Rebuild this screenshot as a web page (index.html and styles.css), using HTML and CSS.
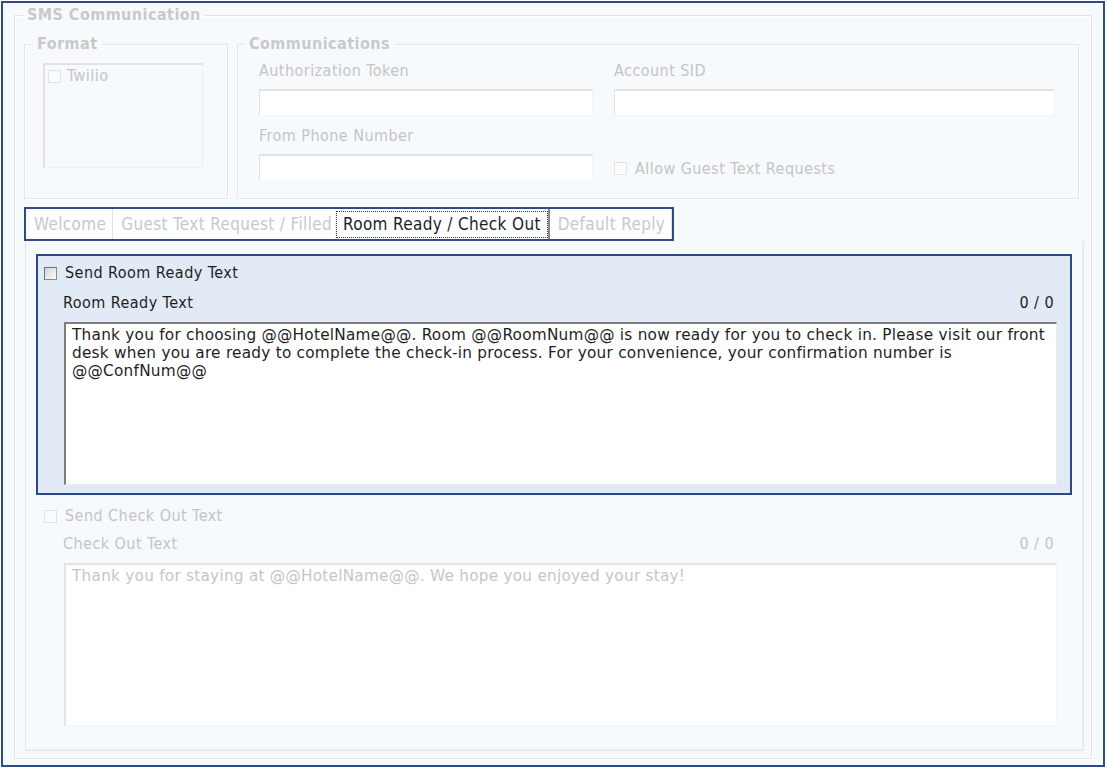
FILE: index.html
```html
<!DOCTYPE html>
<html lang="en">
<head>
    <meta charset="UTF-8">
    <meta name="viewport" content="width=device-width, initial-scale=1.0">
    <title>SMS Communication</title>
    <link rel="stylesheet" href="styles.css">
</head>
<body>
<div class="frame">
    <fieldset class="group sms">
        <legend>SMS Communication</legend>
        <div class="sms-body">
            <div class="top-row">
                <fieldset class="group format">
                    <legend>Format</legend>
                    <div class="listbox">
                        <label class="check disabled twilio"><input type="checkbox" disabled> Twilio</label>
                    </div>
                </fieldset>
                <fieldset class="group comms">
                    <legend>Communications</legend>
                    <div class="comms-grid">
                        <div class="field">
                            <label for="authToken">Authorization Token</label>
                            <input type="text" id="authToken" disabled>
                        </div>
                        <div class="field">
                            <label for="accountSid">Account SID</label>
                            <input type="text" id="accountSid" disabled>
                        </div>
                        <div class="field">
                            <label for="fromPhone">From Phone Number</label>
                            <input type="text" id="fromPhone" disabled>
                        </div>
                        <div class="field field-check">
                            <label class="check disabled"><input type="checkbox" disabled> Allow Guest Text Requests</label>
                        </div>
                    </div>
                </fieldset>
            </div>

            <div class="tabs">
                <span class="tab">Welcome</span>
                <span class="tab">Guest Text Request / Filled</span>
                <span class="tab active"><span class="focus">Room Ready / Check Out</span></span>
                <span class="tab">Default Reply</span>
            </div>

            <div class="tab-page">
                <div class="text-group highlight">
                    <label class="check"><input type="checkbox"> Send Room Ready Text</label>
                    <div class="group-head">
                        <span>Room Ready Text</span>
                        <span class="counter">0 / 0</span>
                    </div>
                    <textarea>Thank you for choosing @@HotelName@@. Room @@RoomNum@@ is now ready for you to check in. Please visit our front desk when you are ready to complete the check-in process. For your convenience, your confirmation number is @@ConfNum@@</textarea>
                </div>

                <div class="text-group muted">
                    <label class="check disabled"><input type="checkbox" disabled> Send Check Out Text</label>
                    <div class="group-head">
                        <span>Check Out Text</span>
                        <span class="counter">0 / 0</span>
                    </div>
                    <textarea disabled>Thank you for staying at @@HotelName@@. We hope you enjoyed your stay!</textarea>
                </div>
            </div>
        </div>
    </fieldset>
</div>
</body>
</html>
```

FILE: styles.css
```css
body {
    margin: 0;
    background-color: #fff;
    font-family: "DejaVu Sans Condensed", "DejaVu Sans", sans-serif;
    font-stretch: condensed;
    font-size: 16px;
    letter-spacing: 0.45px;
    color: #1e1e1e;
}
.frame {
    margin: 1px 3px 4px 1px;
    height: 766px;
    box-sizing: border-box;
    border: 2px solid #2c4a84;
    background-color: #f7fafd;
    padding: 3px 11px 0 11px;
}
fieldset.group {
    margin: 0;
    padding: 0;
    min-width: 0;
    box-sizing: border-box;
    border: 1px solid #e1e6ec;
    box-shadow: inset 1px 1px 0 #fff, 1px 1px 0 #fff;
}
legend {
    margin-left: 8px;
    padding: 0 4px;
    font-weight: bold;
    color: #c9c9c9;
    line-height: 18px;
}
.sms-body {
    padding: 11px 7px 7px 9px;
}
.top-row {
    display: flex;
    gap: 9px;
    margin-right: 5px;
}
.format {
    width: 204px;
}
.comms {
    flex: 1;
}
.comms legend {
    margin-left: 7px;
}
.listbox {
    margin: 10px 0 0 18px;
    width: 160px;
    height: 105px;
    box-sizing: border-box;
    border-top: 2px solid #e2e2e2;
    border-left: 2px solid #e2e2e2;
    border-right: 1px solid #f1f1f1;
    border-bottom: 1px solid #f1f1f1;
    padding: 2px 3px;
}
.comms-grid {
    display: grid;
    grid-template-columns: 334px 1fr;
    column-gap: 21px;
    row-gap: 11px;
    padding: 9px 23px 17px 21px;
}
.field label {
    display: block;
    line-height: 18px;
    margin-bottom: 9px;
    color: #c4c4c4;
}
.field input {
    display: block;
    width: 100%;
    height: 27px;
    margin: 0;
    padding: 0 4px;
    box-sizing: border-box;
    border: 0;
    border-top: 2px solid #e3e3e3;
    border-left: 1px solid #e3e3e3;
    border-right: 1px solid #f4f4f4;
    border-bottom: 1px solid #f4f4f4;
    background-color: #fff;
}
.field-check {
    display: flex;
    align-items: flex-end;
}
.field .check {
    display: flex;
    height: 25px;
    margin: 0;
}
.check {
    display: flex;
    align-items: center;
    gap: 8px;
    line-height: 18px;
}
.check.twilio {
    gap: 6px;
}
.check.disabled {
    color: #c4c4c4;
}
.check input {
    appearance: none;
    -webkit-appearance: none;
    margin: 0;
    width: 13px;
    height: 13px;
    flex: none;
    box-sizing: border-box;
    border: 1px solid #8c8c8c;
    border-top-color: #6f6f6f;
    border-left-color: #6f6f6f;
    border-radius: 0;
    background: linear-gradient(135deg, #d4d4d4, #fbfbfb);
}
.check input:disabled {
    border-color: #e2e2e2;
    background: #fbfbfb;
}
.tabs {
    display: flex;
    width: fit-content;
    height: 34px;
    box-sizing: border-box;
    margin: 8px 0 0 0;
    border: 2px solid #2c4a84;
    background-color: #fff;
    font-size: 17px;
    letter-spacing: 0.34px;
}
.tab {
    display: flex;
    align-items: center;
    padding: 0 6px 0 8px;
    border-right: 1px solid #e2e2e2;
    color: #c8c8c8;
}
.tab:nth-child(2) {
    padding-right: 3px;
    border-right: 1px solid #f0f0f0;
}
.tab.active {
    padding: 0 1px;
    border-right: 2px solid #8a8a8a;
    color: #1e1e1e;
    background-color: #fff;
}
.focus {
    display: block;
    margin-top: 1px;
    padding: 0 6px;
    line-height: 25px;
    outline: 1px dotted #333;
}
.tab-page {
    margin-left: 1px;
    border: 1px solid #e3e6ea;
    border-top: 0;
    box-shadow: inset -1px -1px 0 #eef0f2;
    padding: 13px 11px 14px 10px;
}
.text-group {
    border: 2px solid transparent;
    padding: 8px 13px 8px 6px;
}
.text-group.highlight {
    border-color: #2c4a84;
    background-color: #e2ebf5;
}
.text-group + .text-group {
    margin-top: 2px;
}
.group-head {
    display: flex;
    justify-content: space-between;
    margin: 12px 3px 10px 19px;
    line-height: 18px;
}
.muted .group-head {
    margin-top: 10px;
    color: #c4c4c4;
}
textarea {
    display: block;
    width: calc(100% - 20px);
    height: 163px;
    margin: 0 0 0 20px;
    box-sizing: border-box;
    padding: 2px 6px;
    border: 0;
    border-top: 2px solid #7d7d7d;
    border-left: 2px solid #7d7d7d;
    border-right: 1px solid #ececec;
    border-bottom: 1px solid #ececec;
    background-color: #fff;
    font-family: "DejaVu Sans", sans-serif;
    font-stretch: normal;
    font-size: 15.3px;
    letter-spacing: 0.24px;
    line-height: 18px;
    color: #1e1e1e;
    resize: none;
    overflow: hidden;
}
textarea:disabled {
    border-top-color: #e4e4e4;
    border-left-color: #e4e4e4;
    border-right-color: #f4f4f4;
    border-bottom-color: #f4f4f4;
    color: #c6c6c6;
}
```
